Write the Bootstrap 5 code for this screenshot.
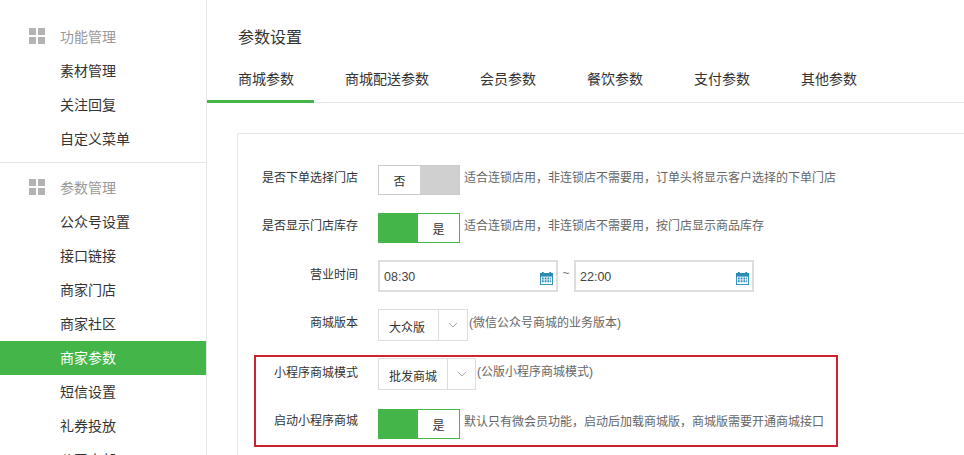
<!DOCTYPE html>
<html lang="zh"><head><meta charset="utf-8">
<link href="https://cdn.jsdelivr.net/npm/bootstrap@5.3.0/dist/css/bootstrap.min.css" rel="stylesheet">
<style>
html,body{height:455px;overflow:hidden}
body{font-family:"Liberation Sans","Noto Sans CJK SC",sans-serif;font-size:12px;color:#333;background:#fff}
.side{width:207px;height:455px;border-right:1px solid #e7e7e7;flex:none;overflow:hidden}
.sgroup{padding-top:20px;padding-bottom:6px}
.sgroup+.sgroup{border-top:1px solid #e7e7e7;padding-top:8px}
.shead,.sitem{height:34px;line-height:34px;font-size:14px;padding-left:60px;display:block;color:#333;text-decoration:none}
.shead{color:#999;position:relative}
.sgrid{position:absolute;left:29px;top:8px;width:16px;height:16px;display:grid;grid-template-columns:7px 7px;grid-template-rows:7px 7px;gap:2px}
.sgrid i{background:#b3b3b3;display:block}
.sitem.on{background:#44b549;color:#fff}
.mainp{flex:1;min-width:0;overflow:hidden}
.ptitle{font-size:16px;line-height:24px;padding:26px 0 0 31px;height:56px;color:#333}
.ttabs{height:47px;border-bottom:1px solid #e7e7e7;display:flex}
.ttab{padding:0 20px 0 31px;height:47px;line-height:47px;font-size:14px;color:#333;text-decoration:none}
.ttab.on{border-bottom:3px solid #44b549}
.panel{margin:30px 0 0 30px;width:760px;border:1px solid #e7e7e7;border-right:0;border-bottom:0;height:330px;padding-top:31px}
.frow{display:flex;align-items:flex-start}
.r2{margin-top:18px}.r3{margin-top:17px}.r6{margin-top:19px}
.flabel{width:120px;text-align:right;margin-right:20px;flex:none;color:#333;line-height:18px;padding-top:3px}
.flabel.top{padding-top:4px}
.flabel.low{padding-top:6px}
.flabel.mid{padding-top:5px}
.flabel.midp{padding-top:6px}
.tog{width:82px;height:30px;display:flex;flex:none;border:1px solid #ccc;background:#fff}
.tog span{width:41px;line-height:33px;text-align:center;font-size:12px}
.tog .blk{flex:1}
.tog.off .blk{background:#d0d0d0}
.tog.yes{border-color:#44b549}
.tog.yes .blk{background:#44b549}
.hint{color:#666;margin-left:4px;line-height:26px;white-space:nowrap}
.hint.shi{margin-left:1px;padding-top:1px}
.tinput{width:180px;height:32px;border:2px solid #ddd;display:flex;justify-content:space-between;padding:6px 3px 0 4px;font-size:12.5px;line-height:18px;color:#444}
.tinput svg{margin-top:4px}
.tilde{width:16px;text-align:center;color:#777;line-height:26px}
.sel{height:32px;border:1px solid #ddd;display:flex;flex:none;font-size:12px}
.sel b{font-weight:400;padding:6px 0 0 10px;line-height:24px;color:#333}
.sel.w1 b{width:59px}
.sel.w2 b{width:68px}
.sel u{flex:1;border-left:1px solid #ddd;display:flex;align-items:center;justify-content:center;text-decoration:none}
.sel.w1{width:90px}
.sel.w2{width:98px}
.redbox{margin:14px 0 0 16px;width:584px;height:92px;border:2px solid #cc2230;padding-top:1px}
.redbox .flabel{width:102px}
</style></head><body>
<div class="d-flex">
<div class="side">
 <div class="sgroup">
  <div class="shead"><span class="sgrid"><i></i><i></i><i></i><i></i></span>功能管理</div>
  <a class="sitem" href="#">素材管理</a><a class="sitem" href="#">关注回复</a><a class="sitem" href="#">自定义菜单</a>
 </div>
 <div class="sgroup">
  <div class="shead"><span class="sgrid"><i></i><i></i><i></i><i></i></span>参数管理</div>
  <a class="sitem" href="#">公众号设置</a><a class="sitem" href="#">接口链接</a><a class="sitem" href="#">商家门店</a><a class="sitem" href="#">商家社区</a><a class="sitem on" href="#">商家参数</a><a class="sitem" href="#">短信设置</a><a class="sitem" href="#">礼券投放</a><a class="sitem" href="#">公司内部</a>
 </div>
</div>
<div class="mainp">
 <div class="ptitle">参数设置</div>
 <div class="ttabs"><a class="ttab on" href="#">商城参数</a><a class="ttab" href="#">商城配送参数</a><a class="ttab" href="#">会员参数</a><a class="ttab" href="#">餐饮参数</a><a class="ttab" href="#">支付参数</a><a class="ttab" href="#">其他参数</a></div>
 <div class="panel">
  <div class="frow"><div class="flabel top">是否下单选择门店</div><div class="tog off"><span>否</span><span class="blk"></span></div><div class="hint">适合连锁店用，非连锁店不需要用，订单头将显示客户选择的下单门店</div></div>
  <div class="frow r2"><div class="flabel top">是否显示门店库存</div><div class="tog yes"><span class="blk"></span><span>是</span></div><div class="hint">适合连锁店用，非连锁店不需要用，按门店显示商品库存</div></div>
  <div class="frow r3"><div class="flabel low">营业时间</div><div class="tinput">08:30<svg width="13" height="13" viewBox="0 0 14 14"><path fill="#2b8cb5" d="M0 1h2V0h2v1h6V0h2v1h2v13H0z"/><path fill="#fff" d="M1 5h12v8H1z"/><path fill="#2b8cb5" d="M2 6h2v2H2zM5 6h2v2H5zM8 6h2v2H8zM11 6h1v2h-1zM2 9h2v2H2zM5 9h2v2H5zM8 9h2v2H8zM11 9h1v2h-1z"/></svg></div><div class="tilde">~</div><div class="tinput">22:00<svg width="13" height="13" viewBox="0 0 14 14"><path fill="#2b8cb5" d="M0 1h2V0h2v1h6V0h2v1h2v13H0z"/><path fill="#fff" d="M1 5h12v8H1z"/><path fill="#2b8cb5" d="M2 6h2v2H2zM5 6h2v2H5zM8 6h2v2H8zM11 6h1v2h-1zM2 9h2v2H2zM5 9h2v2H5zM8 9h2v2H8zM11 9h1v2h-1z"/></svg></div></div>
  <div class="frow r3"><div class="flabel mid">商城版本</div><div class="sel w1"><b>大众版</b><u><svg width="10" height="6" viewBox="0 0 10 6"><path d="M1 1l4 4 4-4" fill="none" stroke="#aaa"/></svg></u></div><div class="hint shi">(微信公众号商城的业务版本)</div></div>
  <div class="redbox">
   <div class="frow"><div class="flabel midp">小程序商城模式</div><div class="sel w2"><b>批发商城</b><u><svg width="10" height="6" viewBox="0 0 10 6"><path d="M1 1l4 4 4-4" fill="none" stroke="#aaa"/></svg></u></div><div class="hint shi">(公版小程序商城模式)</div></div>
   <div class="frow r6"><div class="flabel">启动小程序商城</div><div class="tog yes"><span class="blk"></span><span>是</span></div><div class="hint">默认只有微会员功能，启动后加载商城版，商城版需要开通商城接口</div></div>
  </div>
 </div>
</div>
</div>
<script src="https://cdn.jsdelivr.net/npm/bootstrap@5.3.0/dist/js/bootstrap.bundle.min.js"></script>
</body></html>
